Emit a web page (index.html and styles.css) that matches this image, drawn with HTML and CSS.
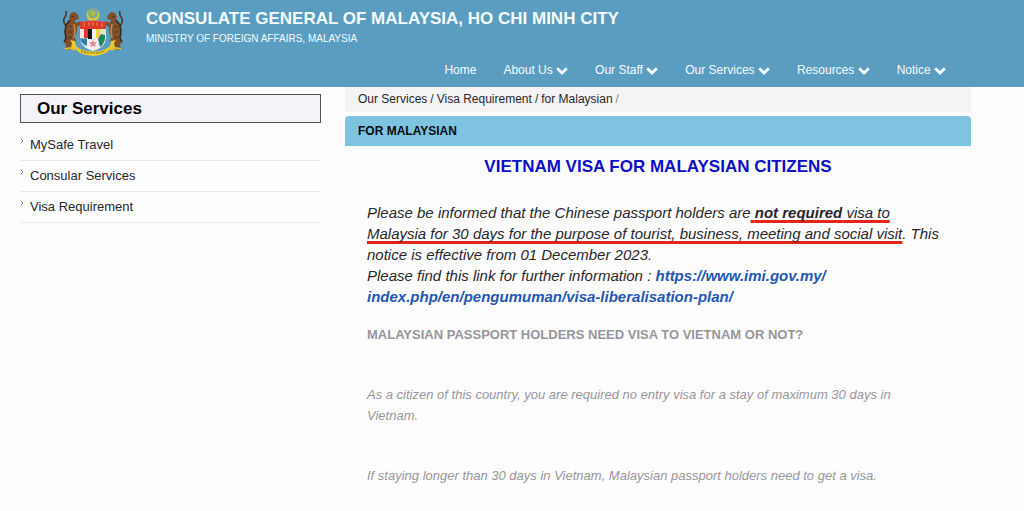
FILE: index.html
```html
<!DOCTYPE html>
<html lang="en">
<head>
<meta charset="utf-8">
<meta name="viewport" content="width=device-width, initial-scale=1">
<title>Consulate General of Malaysia, Ho Chi Minh City</title>
<link rel="stylesheet" href="styles.css">
</head>
<body>
<svg class="defs" aria-hidden="true">
  <symbol id="chevron" viewBox="0 0 12 8"><path d="M1.200 1.300 6 6l4.800-4.700" fill="none" stroke="currentColor" stroke-width="2.800"/></symbol>
  <symbol id="caret" viewBox="0 0 4 6"><path d="M.8.8 3 3 .8 5.200" fill="none" stroke="currentColor" stroke-width=".9"/></symbol>
  <symbol id="tiger" viewBox="0 0 20 42">
    <path d="M3 17Q-1 12 2 8q2-3 1-6" fill="none" stroke="#4d3322" stroke-width="1.500"/>
    <path d="M11 3 8 4 6 8l1 3-4 5-1 7 1 6-2 4 2 3-1 5 5 0 2-5 4-3-1-5 2-5 0-5 5-3 1-3-5 1-2 1-1-3 4-1-1-4-3-3z" fill="#80502a"/>
    <path d="M7 11l-4 5-1 7 1 6-2 4" fill="none" stroke="#3b281d" stroke-width="1.600"/>
    <path d="M8 7l3 1M6 17l3 1M5 23l4 0M5 29l4-1" stroke="#51321e"/>
    <path d="M11 15l1 7-1 7" fill="none" stroke="#c28a50" stroke-width="1.500"/>
  </symbol>
</svg>
<header class="banner">
  <div class="brand">
    <svg class="crest" viewBox="0 0 62 50" role="img" aria-label="Coat of arms of Malaysia">
      <circle cx="31" cy="7" r="6.500" fill="#d6c936"/>
      <circle cx="31" cy="5.500" r="4.600" fill="#5b9dc0"/>
      <path d="M31 1.500l1 2 2-.6-.8 2 2 1-2 .8.4 2.200-2-1-1.200 1.600-.8-2-2 .4 1-2-1.800-1.200 2-.6-.6-2 2 .8z" fill="#a9bf54"/>
      <use href="#tiger" x="1" y="1" width="20" height="42"/>
      <use href="#tiger" width="20" height="42" transform="matrix(-1 0 0 1 61 1)"/>
      <path d="M18 14q13-3 26 0v15q0 10-13 14-13-4-13-14z" fill="#f2eeee"/>
      <path d="M18 14q13-3 26 0v7H18z" fill="#d9382a"/>
      <path d="M22 15v4m5-5v4m4-4v4m4-4v4m5-3v4" stroke="#f08a55"/>
      <path d="M18 21h4v10h-4z" fill="#f1e7e2"/>
      <path d="M22 21h4v9h-4z" fill="#e33424"/>
      <path d="M26 21h4v10h-4z" fill="#151819"/>
      <path d="M30 21h4v9h-4z" fill="#f7f2ee"/>
      <path d="M34 21h4v9h-4z" fill="#efd338"/>
      <path d="M38 21h6v6h-6z" fill="#dfe4c6"/>
      <path d="M18 30q4 1 7 0v8q-6-2-7-8z" fill="#347cab"/>
      <path d="M36 31l3-5 4 1v4q-1 5-5 8z" fill="#23845b"/>
      <path d="M31 32l1.200 2 2.600.2-1.600 2 .4 2.800-2.600-1-2.600 1 .4-2.800-1.600-2 2.600-.2z" fill="#df8f96"/>
      <path d="M8 32l5 1 1 5 4 3q13 5 26 0l4-3 1-5 5-1-2 3 1 5-4 1-5 4q-13 6-26 0l-5-4-4-1 1-5z" fill="#e8ca2d"/>
      <path d="M19 43q12 4 24 0" fill="none" stroke="#95791e" stroke-width="1.200" stroke-dasharray="2 1"/>
      <path d="M3 41l5-1 5 2M59 41l-5-1-5 2" fill="none" stroke="#d9bd35" stroke-width="2"/>
    </svg>
    <div class="names">
      <h1 class="site-name">CONSULATE GENERAL OF MALAYSIA, HO CHI MINH CITY</h1>
      <p class="ministry">MINISTRY OF FOREIGN AFFAIRS, MALAYSIA</p>
    </div>
  </div>
  <nav class="menu" aria-label="Main">
    <a href="#">Home</a>
    <a href="#">About Us <svg class="chevron"><use href="#chevron"/></svg></a>
    <a href="#">Our Staff <svg class="chevron"><use href="#chevron"/></svg></a>
    <a href="#">Our Services <svg class="chevron"><use href="#chevron"/></svg></a>
    <a href="#">Resources <svg class="chevron"><use href="#chevron"/></svg></a>
    <a href="#">Notice <svg class="chevron"><use href="#chevron"/></svg></a>
  </nav>
</header>
<div class="page">
  <aside class="sidebar">
    <h2 class="side-title">Our Services</h2>
    <ul class="side-list">
      <li><svg class="caret"><use href="#caret"/></svg><a href="#">MySafe Travel</a></li>
      <li><svg class="caret"><use href="#caret"/></svg><a href="#">Consular Services</a></li>
      <li><svg class="caret"><use href="#caret"/></svg><a href="#">Visa Requirement</a></li>
    </ul>
  </aside>
  <main class="content">
    <nav class="crumbs" aria-label="Breadcrumb">
      <a href="#">Our Services</a><span>/</span><a href="#">Visa Requirement</a><span>/</span><a href="#">for Malaysian</a><span class="last">/</span>
    </nav>
    <h2 class="panel-title">FOR MALAYSIAN</h2>
    <article class="article">
      <h3 class="headline">VIETNAM VISA FOR MALAYSIAN CITIZENS</h3>
      <p class="notice">Please be informed that the Chinese passport holders are<span class="marked"> <b>not required</b> visa to Malaysia for 30 days for the purpose of tourist, business, meeting and social visit</span>. This notice is effective from 01 December 2023.<br>Please find this link for further information : <a href="#">https://www.imi.gov.my/<wbr>index.php/en/pengumuman/visa-liberalisation-plan/</a></p>
      <h4 class="question">MALAYSIAN PASSPORT HOLDERS NEED VISA TO VIETNAM OR NOT?</h4>
      <p class="answer">As a citizen of this country, you are required no entry visa for a stay of maximum 30 days in Vietnam.</p>
      <p class="answer">If staying longer than 30 days in Vietnam, Malaysian passport holders need to get a visa.</p>
    </article>
  </main>
</div>
</body>
</html>
```
FILE: styles.css
```css
* { box-sizing: border-box; }

body {
  margin: 0;
  background: #fefdfe;
  color: #28272b;
  font-family: "Liberation Sans", Arial, sans-serif;
}

h1, h2, h3, h4, p, ul { margin: 0; padding: 0; }
a { color: inherit; text-decoration: none; }
.defs { display: none; }

.banner {
  padding: 8px 78px 4px 62px;
  background: #5b9dc0;
  color: #f4fbff;
}

.brand { display: flex; gap: 22px; }
.crest { width: 62px; height: 50px; flex: none; }
.site-name { font-size: 17px; line-height: 22px; }
.ministry { font-size: 10px; line-height: 18px; }

.menu {
  display: flex;
  justify-content: flex-end;
  gap: 27px;
  font-size: 12px;
  line-height: 25px;
}
.menu a { white-space: nowrap; }
.chevron { width: 12px; height: 8px; vertical-align: -1px; }

.page {
  display: grid;
  grid-template-columns: 301fr 626fr;
  gap: 24px;
  padding: 0 53px 0 20px;
}

.side-title {
  margin-top: 7px;
  padding: 0 16px;
  border: 1px solid #55545a;
  background: #f5f3f7;
  color: #060608;
  font-size: 17px;
  line-height: 27px;
}
.side-list { margin-top: 7px; list-style: none; font-size: 13px; }
.side-list li {
  display: flex;
  gap: 6px;
  border-bottom: 1px solid #e9e8ea;
  line-height: 30px;
}
.caret { width: 4px; height: 6px; margin-top: 8px; color: #77767a; }

.crumbs {
  padding: 0 13px;
  background: #f5f3f6;
  font-size: 12px;
  line-height: 25px;
}
.crumbs span { margin: 0 3px; }
.crumbs .last { color: #89888c; }

.panel-title {
  margin-top: 4px;
  padding: 0 13px;
  border-radius: 4px 4px 0 0;
  background: #7ec4e0;
  color: #080c12;
  font-size: 12px;
  line-height: 30px;
}

.article { padding: 10px 22px; }
.headline { color: #0b0fc8; font-size: 17px; line-height: 22px; text-align: center; }
.notice { margin-top: 24px; font-size: 15px; font-style: italic; line-height: 21px; }
.notice a { color: #2257b5; font-weight: bold; }
.marked {
  text-decoration: underline 3px #e3241b;
  text-decoration-skip-ink: none;
  text-underline-offset: 2px;
}
.question { margin-top: 17px; color: #97969b; font-size: 13px; line-height: 21px; }
.answer {
  margin-top: 39px;
  padding-right: 20px;
  color: #97969b;
  font-size: 13px;
  font-style: italic;
  line-height: 21px;
}
```
